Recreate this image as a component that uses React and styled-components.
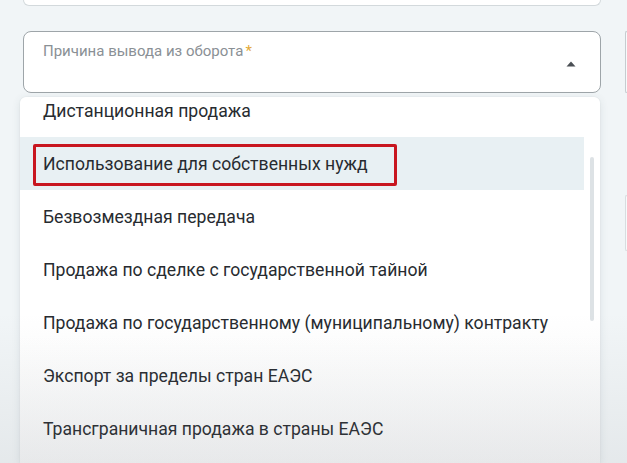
import React from "react";
import styled, { createGlobalStyle } from "styled-components";

const Global = createGlobalStyle`
  html, body { margin: 0; padding: 0; }
  body {
    background: #f1f5f7;
    font-family: Roboto, "Noto Sans", Arial, sans-serif;
    overflow: hidden;
  }
`;

const Page = styled.div`
  position: relative;
  width: 627px;
  height: 463px;
  overflow: hidden;
  display: grid;
  grid-template-columns: 578px 1fr;
  column-gap: 24px;
  padding-left: 23px;
  box-sizing: border-box;

  &::after {
    content: "";
    position: absolute;
    left: 0;
    right: 0;
    bottom: 0;
    height: 150px;
    pointer-events: none;
    background: linear-gradient(180deg, rgba(120, 125, 130, 0) 0%, rgba(120, 125, 130, 0.1) 100%);
  }
`;

const Main = styled.div`
  display: flex;
  flex-direction: column;
`;

const TopCard = styled.div`
  height: 6px;
  background: #ffffff;
  border: 1px solid #d3d9dc;
  border-top: none;
  border-radius: 0 0 9px 9px;
  box-sizing: border-box;
`;

const Field = styled.div`
  margin-top: 25px;
  height: 62px;
  background: #ffffff;
  border: 1px solid #9ea5a9;
  border-radius: 8px;
  box-sizing: border-box;
  display: flex;
  align-items: flex-start;
  justify-content: space-between;
  padding: 10px 24px 0 19px;
`;

const Label = styled.span`
  font-size: 15px;
  color: #8a9095;
`;

const Req = styled.span`
  color: #e3a93a;
  margin-left: 2px;
`;

const Arrow = styled.svg`
  margin-top: 19px;
  width: 10px;
  height: 6px;
`;

const Dropdown = styled.div`
  position: relative;
  margin-top: 4px;
  margin-left: -3px;
  width: 580px;
  flex: 1;
  background: linear-gradient(180deg, #ffffff 0%, #ffffff 65%, #f4f5f6 100%);
  border-radius: 6px 6px 0 0;
  box-shadow: 0 2px 8px rgba(60, 80, 90, 0.12), 0 0 1px rgba(60, 80, 90, 0.2);
  overflow: hidden;
`;

const List = styled.ul`
  list-style: none;
  margin: -13px 16px 0 0;
  padding: 0;
`;

const Item = styled.li`
  position: relative;
  height: 53px;
  display: flex;
  align-items: center;
  padding-left: 23px;
  font-size: 17.6px;
  color: #272b30;
  background: ${(p) => (p.$active ? "#e8f0f3" : "transparent")};
`;

const Marker = styled.span`
  position: absolute;
  left: 13px;
  top: 7px;
  width: 364px;
  height: 42px;
  border: 3px solid #c8161f;
  border-radius: 2px;
  box-sizing: border-box;
`;

const Scrollbar = styled.div`
  position: absolute;
  right: 6px;
  top: 60px;
  width: 4px;
  height: 164px;
  border-radius: 3px;
  background: #dde2e5;
`;

const Side = styled.div`
  display: flex;
  flex-direction: column;
`;

const SideField = styled.div`
  margin-top: ${(p) => p.$top}px;
  height: ${(p) => p.$h}px;
  border: 1px solid ${(p) => p.$border};
  border-right: none;
  border-radius: 8px 0 0 8px;
  background: #f7fafb;
  box-sizing: border-box;
`;

const items = [
  "Дистанционная продажа",
  "Использование для собственных нужд",
  "Безвозмездная передача",
  "Продажа по сделке с государственной тайной",
  "Продажа по государственному (муниципальному) контракту",
  "Экспорт за пределы стран ЕАЭС",
  "Трансграничная продажа в страны ЕАЭС",
];

export default function App() {
  return (
    <>
      <Global />
      <Page>
        <Main>
          <TopCard />
          <Field>
            <Label>
              Причина вывода из оборота<Req>*</Req>
            </Label>
            <Arrow viewBox="0 0 10 6">
              <path d="M5 0.5 L9.5 5.5 L0.5 5.5 Z" fill="#4a4f54" />
            </Arrow>
          </Field>
          <Dropdown>
            <List>
              {items.map((t, i) => (
                <Item key={t} $active={i === 1}>
                  {t}
                  {i === 1 && <Marker />}
                </Item>
              ))}
            </List>
            <Scrollbar />
          </Dropdown>
        </Main>
        <Side>
          <SideField $top={31} $h={62} $border="#c6ccd0" />
          <SideField $top={102} $h={56} $border="#d8dde0" />
        </Side>
      </Page>
    </>
  );
}
